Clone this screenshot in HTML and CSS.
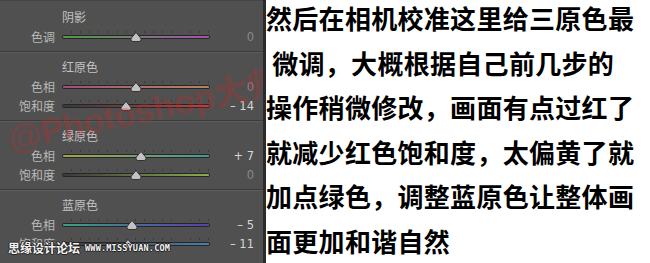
FILE: index.html
```html
<!DOCTYPE html>
<html lang="zh-CN">
<head>
<meta charset="utf-8">
<title>相机校准</title>
<link rel="stylesheet" href="styles.css">
</head>
<body>
<div class="page">
  <div class="panel">
    <section class="group">
      <div class="group-title">阴影</div>
      <div class="row">
        <span class="label">色调</span>
        <div class="track t-shadow"><svg class="thumb" style="left:50%" viewBox="0 0 11 10" width="11" height="10"><path d="M5.5 0.5 L9.3 5 Q10.5 6.2 10.5 7.6 Q10.5 9.5 8.5 9.5 L2.5 9.5 Q0.5 9.5 0.5 7.6 Q0.5 6.2 1.7 5 Z"/></svg></div>
        <span class="value zero">0</span>
      </div>
    </section>
    <section class="group">
      <div class="group-title">红原色</div>
      <div class="row">
        <span class="label">色相</span>
        <div class="track t-red-hue"><svg class="thumb" style="left:50%" viewBox="0 0 11 10" width="11" height="10"><path d="M5.5 0.5 L9.3 5 Q10.5 6.2 10.5 7.6 Q10.5 9.5 8.5 9.5 L2.5 9.5 Q0.5 9.5 0.5 7.6 Q0.5 6.2 1.7 5 Z"/></svg></div>
        <span class="value zero">0</span>
      </div>
      <div class="row">
        <span class="label">饱和度</span>
        <div class="track t-red-sat"><svg class="thumb" style="left:43%" viewBox="0 0 11 10" width="11" height="10"><path d="M5.5 0.5 L9.3 5 Q10.5 6.2 10.5 7.6 Q10.5 9.5 8.5 9.5 L2.5 9.5 Q0.5 9.5 0.5 7.6 Q0.5 6.2 1.7 5 Z"/></svg></div>
        <span class="value">– 14</span>
      </div>
    </section>
    <section class="group">
      <div class="group-title">绿原色</div>
      <div class="row">
        <span class="label">色相</span>
        <div class="track t-green-hue"><svg class="thumb" style="left:53.5%" viewBox="0 0 11 10" width="11" height="10"><path d="M5.5 0.5 L9.3 5 Q10.5 6.2 10.5 7.6 Q10.5 9.5 8.5 9.5 L2.5 9.5 Q0.5 9.5 0.5 7.6 Q0.5 6.2 1.7 5 Z"/></svg></div>
        <span class="value">+ 7</span>
      </div>
      <div class="row">
        <span class="label">饱和度</span>
        <div class="track t-green-sat"><svg class="thumb" style="left:50%" viewBox="0 0 11 10" width="11" height="10"><path d="M5.5 0.5 L9.3 5 Q10.5 6.2 10.5 7.6 Q10.5 9.5 8.5 9.5 L2.5 9.5 Q0.5 9.5 0.5 7.6 Q0.5 6.2 1.7 5 Z"/></svg></div>
        <span class="value zero">0</span>
      </div>
    </section>
    <section class="group">
      <div class="group-title">蓝原色</div>
      <div class="row">
        <span class="label">色相</span>
        <div class="track t-blue-hue"><svg class="thumb" style="left:47.5%" viewBox="0 0 11 10" width="11" height="10"><path d="M5.5 0.5 L9.3 5 Q10.5 6.2 10.5 7.6 Q10.5 9.5 8.5 9.5 L2.5 9.5 Q0.5 9.5 0.5 7.6 Q0.5 6.2 1.7 5 Z"/></svg></div>
        <span class="value">– 5</span>
      </div>
      <div class="row">
        <span class="label">饱和度</span>
        <div class="track t-blue-sat"><svg class="thumb" style="left:44.5%" viewBox="0 0 11 10" width="11" height="10"><path d="M5.5 0.5 L9.3 5 Q10.5 6.2 10.5 7.6 Q10.5 9.5 8.5 9.5 L2.5 9.5 Q0.5 9.5 0.5 7.6 Q0.5 6.2 1.7 5 Z"/></svg></div>
        <span class="value">– 11</span>
      </div>
    </section>
    <div class="wm-red">@Photoshop大师</div>
    <div class="wm-site"><span class="wm-cn">思缘设计论坛</span><span class="wm-url">WWW.MISSYUAN.COM</span></div>
  </div>
  <div class="edge"></div>
  <div class="text">
    <div class="line">然后在相机校准这里给三原色最</div>
    <div class="line"> 微调，大概根据自己前几步的</div>
    <div class="line">操作稍微修改，画面有点过红了</div>
    <div class="line">就减少红色饱和度，太偏黄了就</div>
    <div class="line">加点绿色，调整蓝原色让整体画</div>
    <div class="line">面更加和谐自然</div>
  </div>
</div>
</body>
</html>
```

FILE: styles.css
```css
html, body {
  margin: 0;
  padding: 0;
  background: #ffffff;
}

.page {
  width: 650px;
  height: 263px;
  overflow: hidden;
  display: grid;
  grid-template-columns: 263px 3px 1fr;
}

.panel {
  position: relative;
  overflow: hidden;
  background: #505050;
  border-top: 1px solid #454545;
  padding-top: 1px;
  font-family: "Noto Sans CJK SC", "Noto Sans", sans-serif;
  font-size: 12px;
  color: #b9b9b9;
}

.group {
  padding: 4px 0 5px;
}

.group + .group {
  border-top: 1px solid #3b3b3b;
  box-shadow: inset 0 1px 0 #5c5c5c;
}

.group-title {
  height: 21px;
  line-height: 21px;
  padding-left: 62px;
  color: #c2c2c2;
}

.row {
  height: 19px;
  display: grid;
  grid-template-columns: 55px 146px 1fr;
  column-gap: 8px;
  align-items: center;
  padding-right: 9px;
}

.label {
  text-align: right;
  line-height: 19px;
}

.value {
  text-align: right;
  font-family: "DejaVu Sans", "Liberation Sans", sans-serif;
  font-size: 11.5px;
  color: #d6d6d6;
  white-space: pre;
}

.value.zero {
  color: #888888;
}

.track {
  position: relative;
  height: 2px;
  border-radius: 2px;
  box-shadow: 0 0 0 1px #262626;
}

.track::before {
  content: "";
  position: absolute;
  left: 0;
  right: 0;
  top: -5px;
  height: 2px;
  background: repeating-linear-gradient(to right, transparent 0 8px, #3a3a3a 8px 9px, transparent 9px 9.125px);
}

.thumb {
  position: absolute;
  top: -4px;
  transform: translateX(-50%);
  overflow: visible;
}

.thumb path {
  fill: #c2c2c2;
  stroke: #333333;
  stroke-width: 1;
}

.t-shadow { background: linear-gradient(to right, #4f9a45, #7a7a7a 50%, #a552ac); }
.t-red-hue { background: linear-gradient(to right, #a24c7e, #a87070 50%, #b48462); }
.t-red-sat { background: linear-gradient(to right, #3a3a3a, #b84646); }
.t-green-hue { background: linear-gradient(to right, #a2a248, #78a070 50%, #409a98); }
.t-green-sat { background: linear-gradient(to right, #3a3a3a, #8aac50); }
.t-blue-hue { background: linear-gradient(to right, #40a080, #4a6a98 50%, #5a40a8); }
.t-blue-sat { background: linear-gradient(to right, #3a3a3a, #4a80b0); }

.wm-red {
  position: absolute;
  left: 8px;
  top: 118px;
  transform: rotate(-12deg);
  transform-origin: left center;
  font-family: "Liberation Sans", "Noto Sans CJK SC", sans-serif;
  font-weight: 700;
  font-size: 34px;
  line-height: 40px;
  color: rgba(205, 40, 40, 0.28);
  white-space: nowrap;
  pointer-events: none;
}

.wm-site {
  position: absolute;
  left: 8px;
  top: 239px;
  display: flex;
  align-items: center;
  gap: 5px;
  color: #f2f2f2;
  text-shadow: 1px 0 0 #222, -1px 0 0 #222, 0 1px 0 #222, 0 -1px 0 #222;
  white-space: nowrap;
}

.wm-cn {
  font-family: "Noto Sans CJK SC", sans-serif;
  font-weight: 700;
  font-size: 12px;
  line-height: 16px;
}

.wm-url {
  font-family: "DejaVu Sans Mono", "Liberation Mono", monospace;
  font-weight: 700;
  font-size: 8.5px;
  letter-spacing: 0.2px;
  line-height: 16px;
}

.edge {
  background: #2b2b2b;
}

.text {
  font-family: "Noto Sans CJK SC", "Noto Sans", sans-serif;
  font-weight: 700;
  font-size: 26px;
  letter-spacing: 0.3px;
  color: #000000;
}

.line {
  height: 44.6px;
  line-height: 35px;
  white-space: pre;
}
```
